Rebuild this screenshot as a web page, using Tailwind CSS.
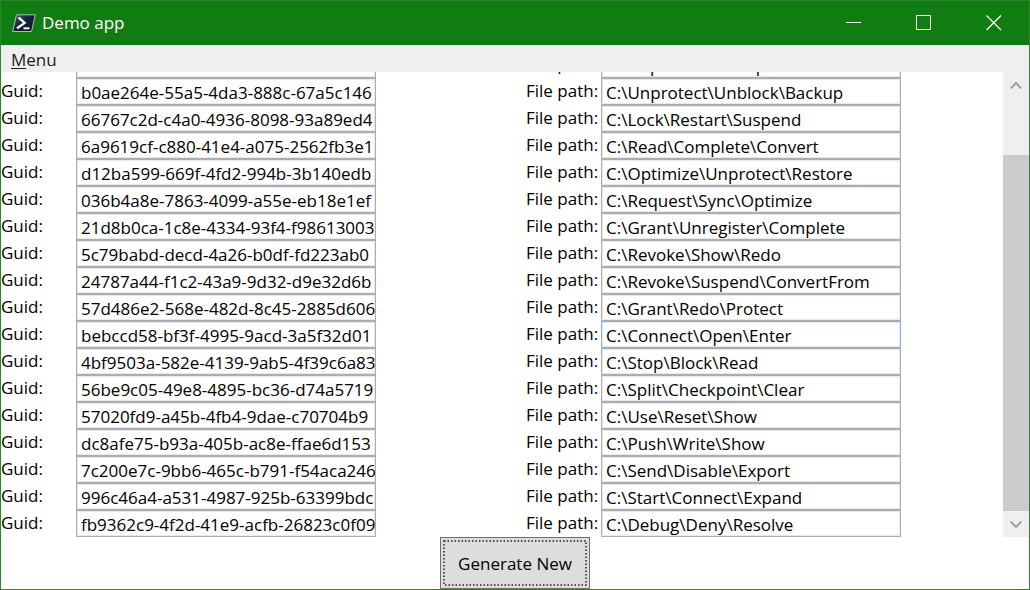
<!DOCTYPE html>
<html lang="en">
<head>
<meta charset="utf-8">
<title>Demo app</title>
<script src="https://cdn.jsdelivr.net/npm/@tailwindcss/browser@4"></script>
</head>
<body class="h-screen overflow-hidden bg-white font-['Open_Sans','Noto_Sans',sans-serif] text-[17px] leading-6 text-black">
<div class="flex h-full flex-col border border-[#2a862a]">
  <header class="flex h-11 shrink-0 items-center bg-[#117c11] pl-[11px] text-white">
    <svg class="h-[19px] w-6 shrink-0" viewBox="0 0 24 19" aria-hidden="true">
      <defs><linearGradient id="ps" x1="0" y1="0" x2="1" y2="1"><stop offset="0" stop-color="#52647c"/><stop offset=".45" stop-color="#14233a"/><stop offset="1" stop-color="#0b1626"/></linearGradient></defs>
      <path d="M4.500 .8H23.300L19.500 17.500H.7Z" fill="url(#ps)" stroke="#a9bccb" stroke-width="1"/>
      <path d="M6.500 3.500L12.700 9L5 14.300" fill="none" stroke="#fff" stroke-width="2.300"/>
      <path d="M11.500 14.300H17.500" stroke="#fff" stroke-width="2"/>
    </svg>
    <h1 class="ml-1.5 flex-1">Demo app</h1>
    <button type="button" aria-label="Minimize" class="flex h-full w-[70px] items-center justify-center"><svg class="size-4" viewBox="0 0 16 16"><path d="M0 7.500H15" stroke="#fff"/></svg></button>
    <button type="button" aria-label="Maximize" class="flex h-full w-[70px] items-center justify-center"><svg class="size-4" viewBox="0 0 16 16"><path d="M.5 .5H14.500V14.500H.5Z" fill="none" stroke="#fff"/></svg></button>
    <button type="button" aria-label="Close" class="flex h-full w-[70px] items-center justify-center"><svg class="size-4" viewBox="0 0 16 16"><path d="M.5 .5L15 15M15 .5L.5 15" stroke="#fff" stroke-width="1.200"/></svg></button>
  </header>
  <nav class="flex h-[27px] shrink-0 items-center bg-[#efefef] pl-2.5 text-[#212121]">
    <button type="button" class="pt-0.5"><span class="underline underline-offset-2">M</span>enu</button>
  </nav>
  <main class="flex min-h-0 flex-1">
    <div id="rows" class="flex min-w-0 flex-1 flex-col justify-end overflow-hidden"></div>
    <div class="flex w-[26px] shrink-0 flex-col bg-[#efefef]">
      <button type="button" aria-label="Scroll up" class="flex h-[26px] items-center justify-center pt-0.5"><svg class="h-3 w-3" viewBox="0 0 12 12"><path d="M.7 8.500L6 3L11.300 8.500" fill="none" stroke="#a0a0a0" stroke-width="2"/></svg></button>
      <div class="flex-[57]"></div>
      <div class="flex-[356] bg-[#cccccc]"></div>
      <button type="button" aria-label="Scroll down" class="flex h-[26px] items-center justify-center"><svg class="h-3 w-3" viewBox="0 0 12 12"><path d="M.7 3.500L6 9L11.300 3.500" fill="none" stroke="#a0a0a0" stroke-width="2"/></svg></button>
    </div>
  </main>
  <footer class="flex shrink-0 justify-center">
    <button type="button" class="relative h-[52px] w-[150px] border border-[#707070] bg-[#dddddd] pt-0.5">Generate New
      <svg class="absolute top-[3px] left-[3px] h-[44px] w-[142px] overflow-visible" aria-hidden="true"><rect width="100%" height="100%" fill="none" stroke="#222" stroke-width="1.500" stroke-dasharray="1.500 2"/></svg>
    </button>
  </footer>
</div>
<template id="row">
  <div class="grid h-[27px] shrink-0 grid-cols-[75px_300px_150px_75px_300px]">
    <label class="pt-px">Guid:</label>
    <input type="text" class="h-[27px] w-full border border-[#abadb3] bg-white pt-px pl-1 shadow-[inset_0_0_0_1px_#e8e9eb] outline-none focus:border-[#569de5]">
    <label class="col-start-4 pt-px whitespace-nowrap">File path:</label>
    <input type="text" class="h-[27px] w-full border border-[#abadb3] bg-white pt-px pl-1 shadow-[inset_0_0_0_1px_#e8e9eb] outline-none focus:border-[#569de5]">
  </div>
</template>
<script>
const data = [
["fb586246-a9c8-45d5-802b-4e8006ca4","C:\\Skip\\Protect\\Stop"],
["b0ae264e-55a5-4da3-888c-67a5c146","C:\\Unprotect\\Unblock\\Backup"],
["66767c2d-c4a0-4936-8098-93a89ed4","C:\\Lock\\Restart\\Suspend"],
["6a9619cf-c880-41e4-a075-2562fb3e1","C:\\Read\\Complete\\Convert"],
["d12ba599-669f-4fd2-994b-3b140edb","C:\\Optimize\\Unprotect\\Restore"],
["036b4a8e-7863-4099-a55e-eb18e1ef","C:\\Request\\Sync\\Optimize"],
["21d8b0ca-1c8e-4334-93f4-f98613003","C:\\Grant\\Unregister\\Complete"],
["5c79babd-decd-4a26-b0df-fd223ab0","C:\\Revoke\\Show\\Redo"],
["24787a44-f1c2-43a9-9d32-d9e32d6b","C:\\Revoke\\Suspend\\ConvertFrom"],
["57d486e2-568e-482d-8c45-2885d606","C:\\Grant\\Redo\\Protect"],
["bebccd58-bf3f-4995-9acd-3a5f32d01","C:\\Connect\\Open\\Enter"],
["4bf9503a-582e-4139-9ab5-4f39c6a83","C:\\Stop\\Block\\Read"],
["56be9c05-49e8-4895-bc36-d74a5719","C:\\Split\\Checkpoint\\Clear"],
["57020fd9-a45b-4fb4-9dae-c70704b9","C:\\Use\\Reset\\Show"],
["dc8afe75-b93a-405b-ac8e-ffae6d153","C:\\Push\\Write\\Show"],
["7c200e7c-9bb6-465c-b791-f54aca246","C:\\Send\\Disable\\Export"],
["996c46a4-a531-4987-925b-63399bdc","C:\\Start\\Connect\\Expand"],
["fb9362c9-4f2d-41e9-acfb-26823c0f09","C:\\Debug\\Deny\\Resolve"]
];
data.forEach((values, i) => {
  const row = document.getElementById("row").content.cloneNode(true);
  const labels = row.querySelectorAll("label");
  row.querySelectorAll("input").forEach((input, j) => {
    input.id = (j ? "path" : "guid") + i;
    labels[j].htmlFor = input.id;
    input.value = values[j];
    if (j && i === 10) input.classList.replace("border-[#abadb3]", "border-[#7eb4ea]");
  });
  document.getElementById("rows").append(row);
});
</script>
</body>
</html>
